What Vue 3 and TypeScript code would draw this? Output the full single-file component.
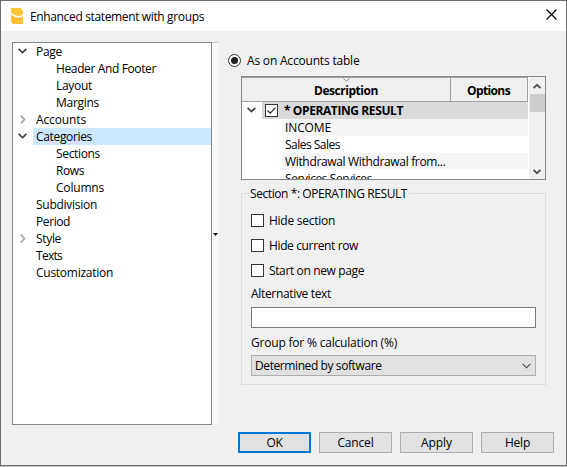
<script setup lang="ts">
import { ref } from 'vue'

interface TreeItem {
  label: string
  width: number
  child?: boolean
  state?: 'open' | 'closed'
}

const tree: TreeItem[] = [
  { label: 'Page', width: 26, state: 'open' },
  { label: 'Header And Footer', width: 100, child: true },
  { label: 'Layout', width: 36, child: true },
  { label: 'Margins', width: 43, child: true },
  { label: 'Accounts', width: 50, state: 'closed' },
  { label: 'Categories', width: 56, state: 'open' },
  { label: 'Sections', width: 44, child: true },
  { label: 'Rows', width: 28, child: true },
  { label: 'Columns', width: 48, child: true },
  { label: 'Subdivision', width: 61 },
  { label: 'Period', width: 34 },
  { label: 'Style', width: 25, state: 'closed' },
  { label: 'Texts', width: 26 },
  { label: 'Customization', width: 77 },
]
const selected = ref('Categories')

const rows = [
  { label: 'INCOME', width: 46 },
  { label: 'Sales Sales', width: 55 },
  { label: 'Withdrawal Withdrawal from...', width: 160.5 },
  { label: 'Services Services', width: 87 },
]

const options = ref([
  { label: 'Hide section', width: 66, checked: false },
  { label: 'Hide current row', width: 89, checked: false },
  { label: 'Start on new page', width: 95, checked: false },
])

const buttons = [
  { label: 'OK', width: 16 },
  { label: 'Cancel', width: 36 },
  { label: 'Apply', width: 31 },
  { label: 'Help', width: 25 },
]

// Tightens the tracking so that a label takes exactly its design width.
const vFit = {
  mounted(el: HTMLElement, binding: { value: number }) {
    const length = (el.textContent ?? '').length
    const natural = el.getBoundingClientRect().width
    el.style.letterSpacing = `${(binding.value - natural) / length}px`
  },
}
</script>

<template>
  <div class="screen">
    <div class="window">
      <header class="titlebar">
        <svg class="logo" width="13" height="16" viewBox="0 0 13 16">
          <path d="M0 0H9.500L12 2.500V6.500C9 8.700 4 8.500 0 4.500Z" fill="#fdc632" />
          <path d="M0 6.200C4 10.200 9 10.200 12 8.300V16H2L0 14Z" fill="#fdc035" />
        </svg>
        <span v-fit="174" class="title">Enhanced statement with groups</span>
        <svg class="close" width="11" height="11" viewBox="0 0 11 11">
          <path d="M.5.5l10 10M10.500.5l-10 10" stroke="#000" stroke-width="1.15" />
        </svg>
      </header>

      <main class="content">
        <nav class="tree">
          <div v-for="item in tree" :key="item.label" class="node">
            <span class="arrow">
              <svg v-if="item.state === 'open'" width="9" height="6" viewBox="0 0 9 6">
                <path d="M.6.8l3.900 3.700L8.400.8" fill="none" stroke="#404040" stroke-width="1.7" />
              </svg>
              <svg v-else-if="item.state === 'closed'" class="right" width="6" height="9" viewBox="0 0 6 9">
                <path d="M.8.6l3.700 3.900L.8 8.400" fill="none" stroke="#a6a6a6" stroke-width="1.7" />
              </svg>
            </span>
            <span
              class="node-label"
              :class="{ child: item.child, selected: item.label === selected }"
              @click="selected = item.label"
            ><span v-fit="item.width">{{ item.label }}</span></span>
          </div>
        </nav>

        <div class="splitter">
          <svg width="5" height="3" viewBox="0 0 5 3"><path d="M0 0h5L2.500 3z" fill="#111" /></svg>
        </div>

        <section class="pane">
          <div class="radio-row">
            <span class="radio"></span>
            <span v-fit="112.5">As on Accounts table</span>
          </div>

          <div class="table">
            <div class="grid">
              <div class="head">
                <div class="th desc">
                  <svg class="sort" width="7" height="4" viewBox="0 0 7 4">
                    <path d="M.3.3l3.200 3L6.700.3" fill="none" stroke="#888" />
                  </svg>
                  <span v-fit="64">Description</span>
                </div>
                <div class="th opts"><span v-fit="43">Options</span></div>
              </div>
              <div class="section-row">
                <span class="arrow">
                  <svg width="9" height="6" viewBox="0 0 9 6">
                    <path d="M.6.8l3.900 3.700L8.400.8" fill="none" stroke="#404040" stroke-width="1.7" />
                  </svg>
                </span>
                <div class="section-cell">
                  <span class="check">
                    <svg width="11" height="11" viewBox="0 0 11 11">
                      <path d="M1.500 5.500l2.700 2.700 5.300-5.500" fill="none" stroke="#222" stroke-width="1.2" />
                    </svg>
                  </span>
                  <span v-fit="119">* OPERATING RESULT</span>
                </div>
              </div>
              <div v-for="row in rows" :key="row.label" class="row">
                <span v-fit="row.width">{{ row.label }}</span>
              </div>
            </div>
            <div class="scrollbar">
              <svg width="8" height="6" viewBox="0 0 8 6"><path d="M.6 5L4 1.700 7.400 5" fill="none" stroke="#555" stroke-width="1.900" /></svg>
              <span class="thumb"></span>
              <svg class="down" width="8" height="6" viewBox="0 0 8 6"><path d="M.6 1L4 4.300 7.400 1" fill="none" stroke="#555" stroke-width="1.900" /></svg>
            </div>
          </div>

          <div class="group">
            <div class="legend"><span v-fit="157">Section *: OPERATING RESULT</span></div>
            <label v-for="option in options" :key="option.label" class="option" @click="option.checked = !option.checked">
              <span class="check">
                <svg v-if="option.checked" width="11" height="11" viewBox="0 0 11 11">
                  <path d="M1.500 5.500l2.700 2.700 5.300-5.500" fill="none" stroke="#222" stroke-width="1.2" />
                </svg>
              </span>
              <span v-fit="option.width">{{ option.label }}</span>
            </label>
            <div class="caption"><span v-fit="80">Alternative text</span></div>
            <input class="field" type="text" />
            <div class="caption"><span v-fit="146">Group for % calculation (%)</span></div>
            <div class="select">
              <span v-fit="126.5">Determined by software</span>
              <svg width="9" height="6" viewBox="0 0 9 6"><path d="M.5.8l4 3.900 4-3.900" fill="none" stroke="#505050" stroke-width="1.1" /></svg>
            </div>
          </div>
        </section>
      </main>

      <footer class="actions">
        <button v-for="(button, i) in buttons" :key="button.label" type="button" :class="{ primary: i === 0 }">
          <span v-fit="button.width">{{ button.label }}</span>
        </button>
      </footer>
    </div>
  </div>
</template>

<style>
body {
  margin: 0;
  overflow: hidden;
}
</style>

<style scoped>
* {
  box-sizing: border-box;
}
svg {
  display: block;
  flex: none;
}
.screen {
  width: 567px;
  height: 467px;
  background: #c2c2c2;
}
.window {
  width: 567px;
  height: 466px;
  border: 1px solid #6f6d6f;
  background: #f0f0f0;
  color: #000;
  font-family: 'Open Sans', 'Noto Sans', sans-serif;
  font-size: 12px;
  line-height: 17px;
  white-space: nowrap;
}
.titlebar {
  display: flex;
  align-items: center;
  height: 30px;
  padding: 0 9px 0 10px;
  background: #fff;
}
.title {
  margin-left: 6px;
}
.close {
  margin: 0 0 3px auto;
}
.content {
  display: flex;
  height: 383px;
  margin-top: 11px;
  padding-left: 11px;
}
.tree {
  width: 200px;
  border: 1px solid #828790;
  background: #fff;
}
.node {
  display: flex;
  height: 17px;
}
.arrow {
  display: flex;
  width: 20px;
  height: 17px;
  padding: 5px 0 0 5px;
}
.arrow .right {
  margin: -1px 0 0 2px;
}
.node-label {
  flex: 1;
  padding-left: 3px;
}
.node-label.child {
  padding-left: 23px;
}
.node-label.selected {
  background: #cce8ff;
}
.splitter {
  display: flex;
  align-items: center;
  width: 7px;
  padding-left: 1px;
  border-top: 1px solid #c8c8c8;
  background: #f8f8f8;
}
.pane {
  width: 327px;
  padding: 10px 0 0 9px;
}
.radio-row {
  display: flex;
  align-items: center;
  gap: 6px;
  height: 17px;
}
.radio {
  display: flex;
  align-items: center;
  justify-content: center;
  width: 13px;
  height: 13px;
  border: 1px solid #333;
  border-radius: 50%;
  background: #fff;
}
.radio::after {
  content: '';
  width: 7px;
  height: 7px;
  border-radius: 50%;
  background: #222;
}
.table {
  display: flex;
  width: 305px;
  height: 104px;
  margin: 7px 0 0 13px;
  border: 1px solid #828790;
  background: #fff;
  overflow: hidden;
}
.grid {
  width: 286px;
}
.head {
  display: flex;
  height: 25px;
  border-top: 1px solid #a0a0a0;
  border-bottom: 1px solid #a0a0a0;
  background: #f0f0f0;
  font-weight: 700;
}
.th {
  position: relative;
  display: flex;
  align-items: center;
  justify-content: center;
  height: 23px;
  padding-top: 1px;
  border-right: 1px solid #a0a0a0;
}
.desc {
  width: 209px;
}
.opts {
  width: 77px;
  padding-right: 1px;
}
.sort {
  position: absolute;
  top: 0;
  left: 101px;
}
.section-row {
  display: flex;
  height: 17px;
}
.section-cell {
  display: flex;
  align-items: center;
  flex: 1;
  gap: 6px;
  padding-left: 3px;
  background: #d9d9d9;
  font-weight: 700;
}
.check {
  flex: none;
  width: 13px;
  height: 13px;
  border: 1px solid #333;
  background: #fff;
}
.row {
  height: 17px;
  margin-left: 40px;
  padding-left: 3px;
}
.row:nth-child(odd) {
  background: #f5f5f5;
}
.scrollbar {
  display: flex;
  flex-direction: column;
  align-items: center;
  width: 17px;
  padding: 6px 1px 4px;
  border-left: 1px solid #fff;
  background: #f0f0f0;
}
.thumb {
  width: 15px;
  height: 18px;
  margin-top: 5px;
  background: #cdcdcd;
}
.down {
  margin-top: auto;
}
.group {
  width: 305px;
  height: 192px;
  margin: 13px 0 0 13px;
  padding: 0 9px;
  border: 1px solid #dcdcdc;
}
.legend {
  width: 160px;
  height: 17px;
  margin: -9px 0 0 -2px;
  padding-left: 1px;
  background: #f0f0f0;
}
.option {
  display: flex;
  align-items: center;
  gap: 5px;
  height: 17px;
  margin-top: 8px;
}
.legend + .option {
  margin-top: 10px;
}
.caption {
  height: 17px;
  margin-top: 6px;
}
.field {
  display: block;
  width: 285px;
  height: 21px;
  margin-top: 5px;
  padding: 0 4px;
  border: 1px solid #7a7a7a;
  background: #fff;
  font: inherit;
  outline: none;
}
.select {
  display: flex;
  align-items: center;
  justify-content: space-between;
  width: 285px;
  height: 21px;
  margin-top: 4px;
  padding: 0 4px 0 3px;
  border: 1px solid #adadad;
  background: #e1e1e1;
}
.actions {
  display: flex;
  justify-content: flex-end;
  gap: 8px;
  margin-top: 7px;
  padding-right: 12px;
}
button {
  display: flex;
  align-items: center;
  justify-content: center;
  width: 73px;
  height: 21px;
  padding: 0;
  border: 1px solid #adadad;
  background: #e1e1e1;
  color: #000;
  font: inherit;
}
button.primary {
  border: 2px solid #0078d7;
}
</style>
